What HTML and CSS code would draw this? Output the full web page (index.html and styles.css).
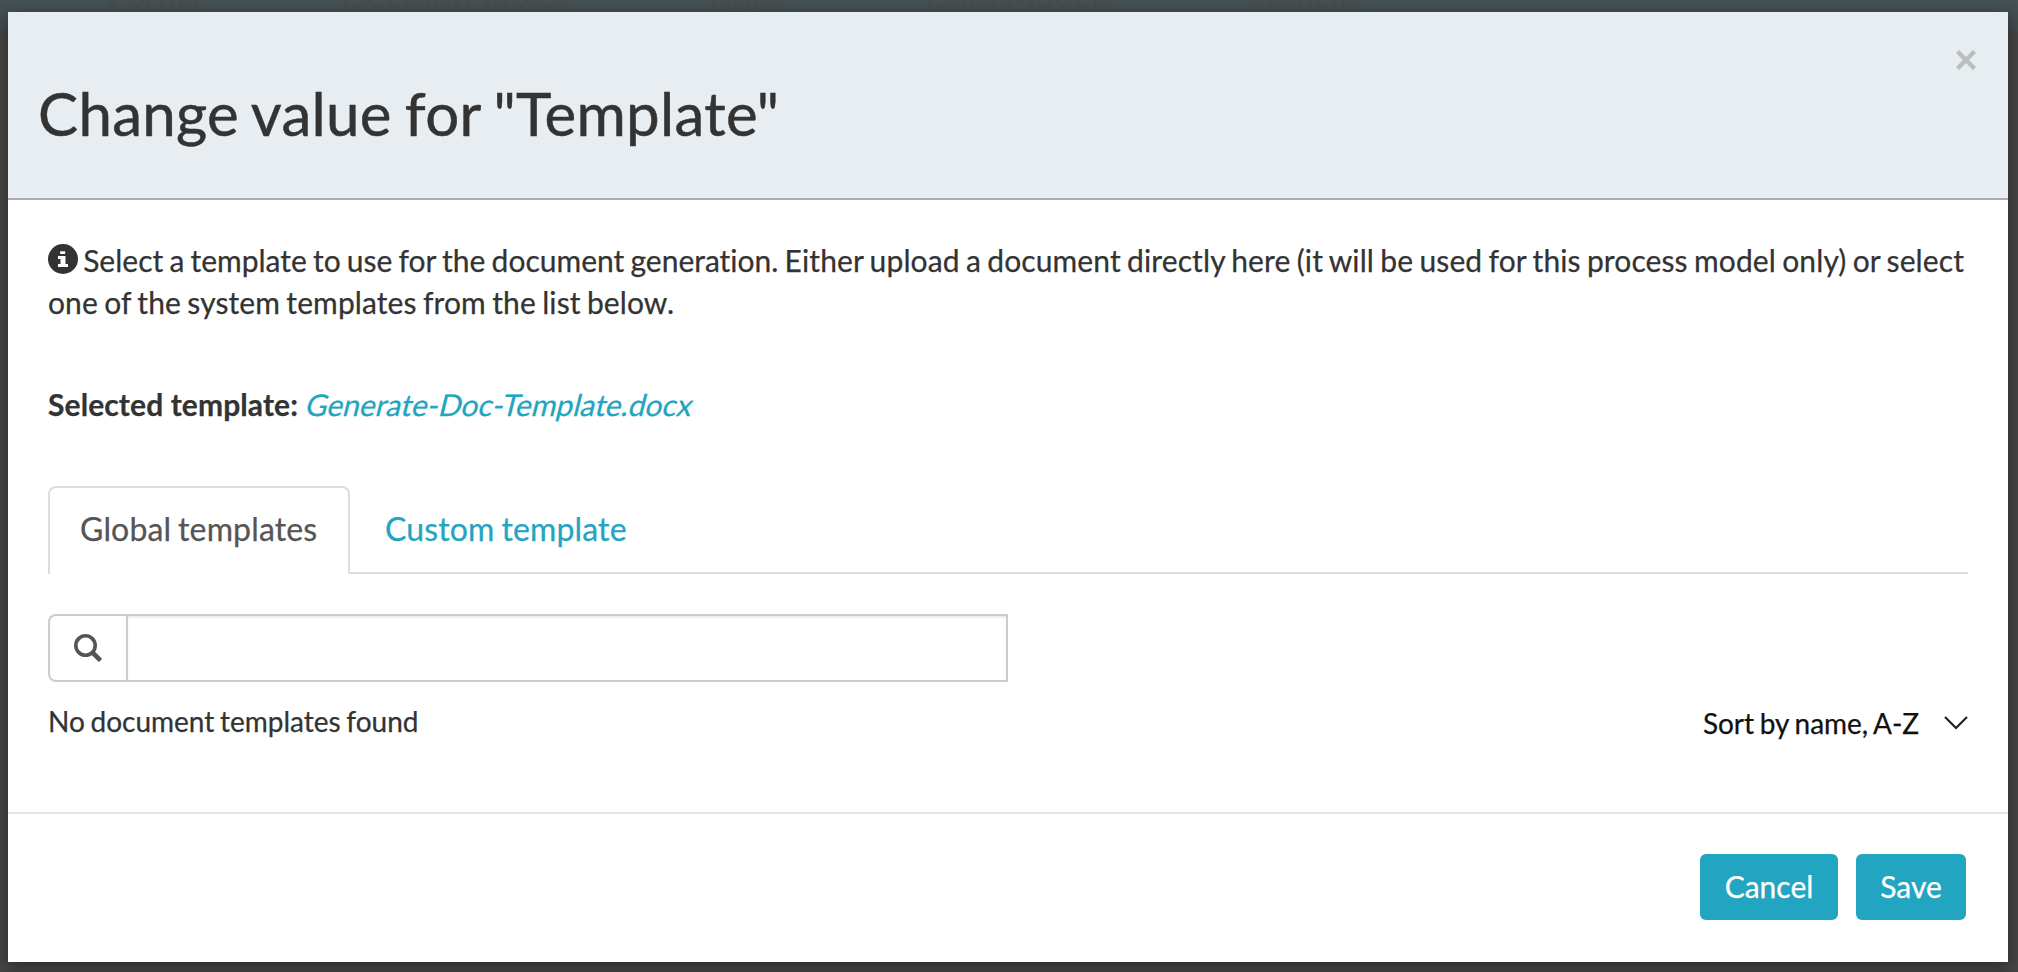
FILE: index.html
```
<!DOCTYPE html>
<html lang="en">
<head>
<meta charset="utf-8">
<title>Change value</title>
<link rel="stylesheet" href="styles.css">
</head>
<body>
<div class="backdrop-nav" aria-hidden="true">
  <span class="nav-item forms">Forms</span>
  <span class="nav-item tables">Decision Tables</span>
  <span class="nav-item apps">Apps</span>
  <span class="nav-item models">Data Models</span>
  <span class="nav-item stencils">Stencils</span>
</div>
<div class="modal">
  <header class="modal-header">
    <h1 class="title">Change value for "Template"</h1>
    <button class="close" aria-label="Close"><svg width="20" height="20" viewBox="0 0 20 20"><path d="M1.500 1.500L18.500 18.500M18.500 1.500L1.500 18.500" stroke="#babebf" stroke-width="4.400"/></svg></button>
  </header>
  <main class="modal-body">
    <p class="info"><svg class="info-icon" width="30" height="30" viewBox="0 0 30 30"><circle cx="15" cy="15" r="15" fill="#333"/><path d="M12.200 7.200h5v2.900h-5zM10 12h7.500v8h2.500v3H10v-3h2.500v-5H10z" fill="#fff"/></svg> Select a template to use for the document generation. <span class="hint">Either upload a document directly here (it will be used for this process model only) or select one of the system templates from the list below.</span></p>
    <p class="selected"><b>Selected template:</b> <a class="file">Generate-Doc-Template.docx</a></p>
    <nav class="tabs">
      <a class="tab active">Global templates</a>
      <a class="tab">Custom template</a>
    </nav>
    <div class="search">
      <span class="addon"><svg width="28" height="28" viewBox="0 0 28 28"><circle cx="11.500" cy="11.500" r="9.700" fill="none" stroke="#555" stroke-width="3.600"/><path d="M18 18L26.500 26.500" stroke="#555" stroke-width="4.600"/></svg></span>
      <input class="field" type="text" aria-label="Search">
    </div>
    <div class="results">
      <span class="empty">No document templates found</span>
      <span class="sort">Sort by name, A-Z <svg width="24" height="14" viewBox="0 0 24 14"><path d="M1 1L12 12L23 1" fill="none" stroke="#222" stroke-width="2.200"/></svg></span>
    </div>
  </main>
  <footer class="modal-footer">
    <button class="btn cancel">Cancel</button>
    <button class="btn save">Save</button>
  </footer>
</div>
</body>
</html>
```
FILE: styles.css
```
* { box-sizing: border-box; }
body { margin: 0; height: 972px; padding: 12px 10px 10px 8px; background: linear-gradient(#465153 0, #404a4c 32px, #454545 32px, #454545 100%); font-family: Lato, sans-serif; font-size: 30px; color: #333; overflow: hidden; font-variant-ligatures: none; word-spacing: -1.5px; -webkit-text-stroke: .25px currentColor; }
.backdrop-nav { position: absolute; left: 0; top: 0; width: 2018px; height: 12px; overflow: hidden; color: #4b4b4c; font-size: 34px; line-height: 40px; white-space: nowrap; }
.nav-item { position: absolute; top: -25px; }
.forms { left: 108px; }
.tables { left: 342px; }
.apps { left: 710px; }
.models { left: 926px; }
.stencils { left: 1248px; }
.modal { position: relative; height: 950px; background: #fff; display: flex; flex-direction: column; box-shadow: 0 5px 15px rgba(0,0,0,.4); }
.modal-header { height: 188px; background: #e8edf1; border-bottom: 2px solid #a3abbd; display: flex; justify-content: space-between; padding: 0 32px 0 30px; }
.title { margin: 65px 0 0; font-size: 60px; line-height: 72px; font-weight: 400; white-space: nowrap; letter-spacing: .3px; word-spacing: -2.5px; -webkit-text-stroke-width: .5px; }
.close { border: 0; background: none; padding: 0; margin-top: 38px; height: 20px; }
.close svg, .addon svg, .sort svg { display: block; }
.modal-body { height: 612px; padding: 39px 40px 0; }
.info { margin: 0 -1px 0 0; line-height: 42px; }
.info-icon { vertical-align: -2px; margin-right: -1px; }
.hint { letter-spacing: .11px; }
.selected { margin: 60px 0 0; line-height: 42px; word-spacing: 0; }
.selected b { letter-spacing: .1px; }
/* Slanted roman letterforms for the file link */
.file { display: inline-block; transform: skewX(-14deg); margin-left: 1px; color: #22a5c0; }
.tabs { margin-top: 61px; height: 88px; display: flex; border-bottom: 2px solid #ddd; font-size: 32px; }
.tab { height: 88px; line-height: 86px; padding: 0 35px; color: #22a5c0; letter-spacing: .15px; }
.active { width: 302px; line-height: 82px; background: #fff; color: #555; border: 2px solid #ddd; border-bottom: 0; border-radius: 8px 8px 0 0; padding: 0 0 0 30px; }
.search { margin-top: 40px; width: 960px; height: 68px; display: flex; }
.addon { width: 78px; border: 2px solid #ccc; border-right: 0; border-radius: 8px 0 0 8px; display: grid; place-items: center; }
.field { flex: 1; border: 2px solid #ccc; border-radius: 0; padding: 0 20px; box-shadow: inset 0 2px 2px rgba(0,0,0,.075); font: inherit; outline: 0; }
.results { display: flex; justify-content: space-between; margin-top: 18px; line-height: 42px; font-size: 28px; }
.sort { display: flex; align-items: center; gap: 25px; color: #111; padding-top: 2px; }
.modal-footer { flex: 1; border-top: 2px solid #e5e5e5; display: flex; justify-content: flex-end; gap: 18px; padding: 40px 42px 0 0; }
.btn { height: 66px; padding: 0 0 2px; border: 0; border-radius: 6px; background: #22a5c0; color: #fff; font: inherit; -webkit-text-stroke: inherit; -webkit-text-stroke-color: #fff; }
.cancel { width: 138px; }
.save { width: 110px; }
```
